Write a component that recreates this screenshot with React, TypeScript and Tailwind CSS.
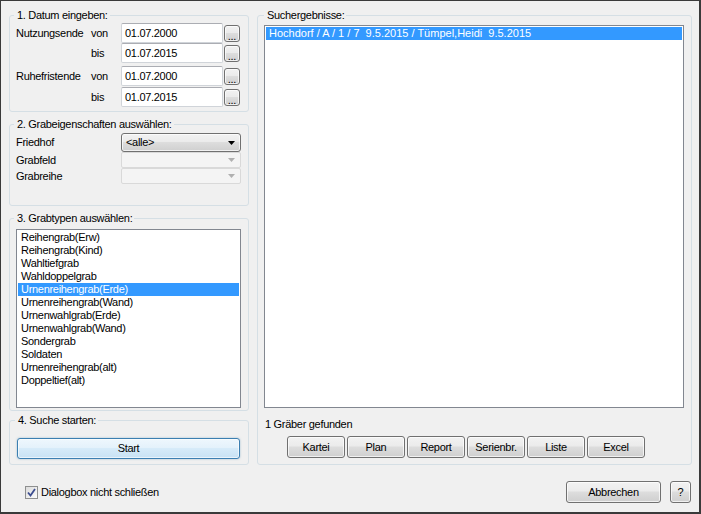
import React from "react";

const btnBase =
  "border border-[#707070] rounded-[3px] bg-[linear-gradient(180deg,#f2f2f2_0%,#ebebeb_45%,#dddddd_50%,#cfcfcf_100%)] shadow-[inset_0_0_0_1px_rgba(255,255,255,0.7)] flex items-center text-black";
const btn = btnBase + " justify-center";

const input =
  "w-[102px] h-[20px] bg-white border border-[#d0d4d9] border-t-[#abadb3] rounded-[2px] pl-[3px] flex items-center";

function DotsButton() {
  return (
    <div className={btnBase + " justify-center w-[16px] h-[17px] ml-[1px] !items-end pb-[1px] leading-[8px]"}>...</div>
  );
}

function DateRow({ label, sub, value, mt }: { label: string; sub: string; value: string; mt: string }) {
  return (
    <div className={"flex items-center h-[20px] " + mt}>
      <div className="w-[75px]">{label}</div>
      <div className="w-[30px]">{sub}</div>
      <div className={input}>{value}</div>
      <DotsButton />
    </div>
  );
}

function Arrow({ color }: { color: string }) {
  return (
    <svg width="7" height="4" viewBox="0 0 7 4" className="block">
      <polygon points="0,0 7,0 3.5,4" fill={color} />
    </svg>
  );
}

const grabtypen = [
  "Reihengrab(Erw)",
  "Reihengrab(Kind)",
  "Wahltiefgrab",
  "Wahldoppelgrab",
  "Urnenreihengrab(Erde)",
  "Urnenreihengrab(Wand)",
  "Urnenwahlgrab(Erde)",
  "Urnenwahlgrab(Wand)",
  "Sondergrab",
  "Soldaten",
  "Urnenreihengrab(alt)",
  "Doppeltief(alt)",
];

const legend = "-ml-[2px] pl-[3px] pr-[2px] leading-[13px]";
const fs = "border border-[#d5dfe5] rounded-[3px] min-w-0";

export default function App() {
  return (
    <div className="w-[701px] h-[514px] bg-[#f0f0f0] border-l border-t border-r-2 border-b-2 border-[#3a3a3a] box-border font-['Liberation_Sans',Arial,sans-serif] text-[11px] leading-[13px] tracking-[-0.3px] text-black select-none flex flex-col">
      <div className="flex pl-[8px] pt-[8px] gap-[8px]">
        {/* left column */}
        <div className="w-[240px] flex flex-col">
          <fieldset className={fs + " h-[103px] pl-[6px]"}>
            <legend className={legend}>1. Datum eingeben:</legend>
            <DateRow label="Nutzungsende" sub="von" value="01.07.2000" mt="mt-[1px]" />
            <DateRow label="" sub="bis" value="01.07.2015" mt="" />
            <DateRow label="Ruhefristende" sub="von" value="01.07.2000" mt="mt-[3px]" />
            <DateRow label="" sub="bis" value="01.07.2015" mt="mt-[1px]" />
          </fieldset>

          <fieldset className={fs + " h-[88px] mt-[6px] pl-[6px]"}>
            <legend className={legend}>2. Grabeigenschaften auswählen:</legend>
            <div className="flex items-center h-[19px] mt-[2px]">
              <div className="w-[105px]">Friedhof</div>
              <div className={btnBase + " justify-between w-[120px] h-[19px] pl-[4px] pr-[5px]"}>
                <span>&lt;alle&gt;</span>
                <Arrow color="#000" />
              </div>
            </div>
            <div className="flex items-center h-[16px]">
              <div className="w-[105px]">Grabfeld</div>
              <div className="w-[120px] h-[16px] border border-[#d9d9d9] rounded-[2px] bg-[#f4f4f4] flex items-center justify-end pr-[5px]">
                <Arrow color="#b0b0b0" />
              </div>
            </div>
            <div className="flex items-center h-[16px]">
              <div className="w-[105px]">Grabreihe</div>
              <div className="w-[120px] h-[16px] border border-[#d9d9d9] rounded-[2px] bg-[#f4f4f4] flex items-center justify-end pr-[5px]">
                <Arrow color="#b0b0b0" />
              </div>
            </div>
          </fieldset>

          <fieldset className={fs + " h-[199px] mt-[6px] pl-[6px]"}>
            <legend className={legend}>3. Grabtypen auswählen:</legend>
            <div className="mt-[4px] w-[225px] h-[179px] bg-white border border-[#828790] p-[1px]">
              {grabtypen.map((g) => (
                <div
                  key={g}
                  className={
                    "h-[13px] pl-[3px] flex items-center " +
                    (g === "Urnenreihengrab(Erde)" ? "bg-[#3399ff] text-white" : "")
                  }
                >
                  {g}
                </div>
              ))}
            </div>
          </fieldset>

          <fieldset className={fs + " h-[51px] mt-[3px] pl-[7px]"}>
            <legend className={legend}>4. Suche starten:</legend>
            <div className="mt-[11px] w-[223px] h-[21px] rounded-[3px] border border-[#3c7fb1] bg-[linear-gradient(180deg,#eef7fd_0%,#e4f2fb_45%,#d6ebf9_50%,#c8e2f4_100%)] shadow-[inset_0_0_0_1px_rgba(255,255,255,0.6),0_0_2px_rgba(60,127,177,0.5)] flex items-center justify-center">
              Start
            </div>
          </fieldset>
        </div>

        {/* right column */}
        <fieldset className={fs + " w-[435px] h-[456px] pl-[6px]"}>
          <legend className={legend + " ml-[0px]"}>Suchergebnisse:</legend>
          <div className="mt-[3px] w-[420px] h-[383px] bg-white border border-[#828790] p-[1px]">
            <div className="h-[13px] pl-[3px] flex items-center bg-[#3399ff] text-white whitespace-pre tracking-[0px]">
              {"Hochdorf / A / 1 / 7  9.5.2015 / Tümpel,Heidi  9.5.2015"}
            </div>
          </div>
          <div className="mt-[10px] pl-[1px]">1 Gräber gefunden</div>
          <div className="mt-[5px] ml-[23px] flex gap-[2px]">
            {["Kartei", "Plan", "Report", "Serienbr.", "Liste", "Excel"].map((b) => (
              <div key={b} className={btn + " w-[58px] h-[22px]"}>
                {b}
              </div>
            ))}
          </div>
        </fieldset>
      </div>

      {/* bottom row */}
      <div className="flex items-center mt-[16px] pl-[24px] h-[22px]">
        <div className="w-[13px] h-[13px] border border-[#8e8f8f] bg-[linear-gradient(135deg,#dcdcdc,#fbfbfb)] flex items-center justify-center">
          <svg width="9" height="9" viewBox="0 0 9 9" className="block">
            <path d="M1 4.5 L3.5 7.5 L8 1" stroke="#3c4d8f" strokeWidth="1.8" fill="none" />
          </svg>
        </div>
        <div className="ml-[3px]">Dialogbox nicht schließen</div>
        <div className="flex-1" />
        <div className={btn + " w-[95px] h-[22px]"}>Abbrechen</div>
        <div className={btn + " w-[21px] h-[22px] ml-[9px] mr-[8px]"}>?</div>
      </div>
    </div>
  );
}
